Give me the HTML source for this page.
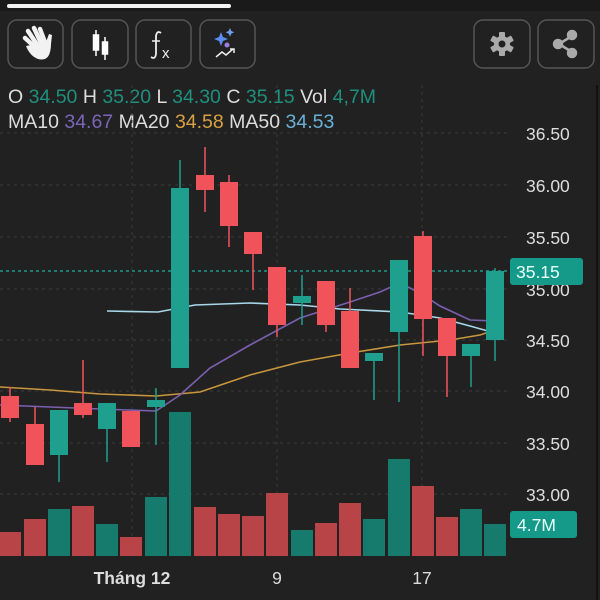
<!DOCTYPE html>
<html><head><meta charset="utf-8"><style>
html,body{margin:0;padding:0;background:#212121;width:600px;height:600px;overflow:hidden}
svg{display:block}
text{font-family:"Liberation Sans",sans-serif}
</style></head><body>
<svg width="600" height="600" viewBox="0 0 600 600" xmlns="http://www.w3.org/2000/svg">
<rect width="600" height="600" fill="#212121"/>
<rect width="600" height="11" fill="#1a1a1a"/>
<rect x="7" y="4" width="224" height="4" rx="2" fill="#f2f2f2"/>
<g fill="none" stroke="#555" stroke-width="1.5">
<rect x="8" y="20" width="55" height="48" rx="9"/>
<rect x="72" y="20" width="56" height="48" rx="9"/>
<rect x="136" y="20" width="55" height="48" rx="9"/>
<rect x="200" y="20" width="55" height="48" rx="9"/>
<rect x="474" y="20" width="56" height="48" rx="9"/>
<rect x="538" y="20" width="56" height="48" rx="9"/>
</g>
<!-- hand -->
<g fill="#f2f2f2" stroke="#f2f2f2" stroke-linecap="round">
<path d="M26 46 q4 10 12 13 q8 2 11 -4 q2 -5 2 -11 l1 -9 l-3 -1 l-3 8 z" stroke="none"/>
<line x1="25" y1="38" x2="36" y2="48" stroke-width="4.5"/>
<line x1="28" y1="31" x2="38" y2="46" stroke-width="4.5"/>
<line x1="34" y1="28" x2="42" y2="45" stroke-width="4.5"/>
<line x1="40" y1="29" x2="46" y2="45" stroke-width="4.5"/>
</g>
<g fill="#fff" stroke="#fff" stroke-width="1.5">
<line x1="96" y1="30" x2="96" y2="56"/><rect x="93.5" y="35" width="5" height="15"/>
<line x1="105" y1="37" x2="105" y2="60"/><rect x="102.5" y="42" width="5" height="12"/>
</g>
<path d="M161 33 q-4 -3 -5 3 v18 q-1 6 -5 3" fill="none" stroke="#eee" stroke-width="1.8"/>
<line x1="152" y1="41" x2="160" y2="41" stroke="#eee" stroke-width="1.5"/>
<text x="162" y="58" fill="#eee" font-size="15">x</text>
<path d="M221 32 l2 5 l5 2 l-5 2 l-2 5 l-2 -5 l-5 -2 l5 -2 z" fill="#5b8def"/>
<path d="M230 28 l1.3 3 l3 1.3 l-3 1.3 l-1.3 3 l-1.3 -3 l-3 -1.3 l3 -1.3 z" fill="#6fa0f0"/>
<circle cx="227" cy="45" r="2.5" fill="#9a7fe0"/>
<path d="M216 57 l6 -5 l4 3 l7 -6 M230 49 h4 v4" stroke="#eee" stroke-width="1.5" fill="none"/>
<g transform="translate(502,44)" fill="#aaa">
<circle r="8"/>
<g><rect x="-3" y="-12" width="6" height="24" rx="1"/><rect x="-3" y="-12" width="6" height="24" rx="1" transform="rotate(60)"/><rect x="-3" y="-12" width="6" height="24" rx="1" transform="rotate(120)"/></g>
<circle r="3.5" fill="#212121"/>
</g>
<g fill="#aaa" stroke="#aaa" stroke-width="2.5">
<line x1="559" y1="44" x2="572" y2="36"/><line x1="559" y1="44" x2="572" y2="52"/>
<circle cx="558" cy="44" r="4"/><circle cx="572" cy="35" r="4"/><circle cx="572" cy="53" r="4"/>
</g>
<text x="8" y="103" font-size="19.5" fill="#ddd">O <tspan fill="#1f8f7e">34.50</tspan> H <tspan fill="#1f8f7e">35.20</tspan> L <tspan fill="#1f8f7e">34.30</tspan> C <tspan fill="#1f8f7e">35.15</tspan> Vol <tspan fill="#1f8f7e">4,7M</tspan></text>
<text x="8" y="128" font-size="19.5" fill="#ddd">MA10 <tspan fill="#7a66b8">34.67</tspan> MA20 <tspan fill="#d9a040">34.58</tspan> MA50 <tspan fill="#6ab0d8">34.53</tspan></text>
<g stroke="#3a3a3a" stroke-width="1" stroke-dasharray="3,4">
<line x1="0" y1="133" x2="510" y2="133"/><line x1="0" y1="185" x2="510" y2="185"/>
<line x1="0" y1="237" x2="510" y2="237"/><line x1="0" y1="289" x2="510" y2="289"/>
<line x1="0" y1="340" x2="510" y2="340"/><line x1="0" y1="391" x2="510" y2="391"/>
<line x1="0" y1="443" x2="510" y2="443"/><line x1="0" y1="494" x2="510" y2="494"/>
<line x1="132" y1="85" x2="132" y2="556"/><line x1="277" y1="85" x2="277" y2="556"/><line x1="422" y1="85" x2="422" y2="556"/>
</g>
<line x1="597" y1="85" x2="597" y2="600" stroke="#111" stroke-width="2"/>
<g>
<rect x="0" y="532" width="21" height="24" fill="#b84448"/>
<rect x="24" y="519" width="22" height="37" fill="#b84448"/>
<rect x="48" y="509" width="22" height="47" fill="#167a6c"/>
<rect x="72" y="506" width="22" height="50" fill="#b84448"/>
<rect x="96" y="524" width="22" height="32" fill="#167a6c"/>
<rect x="120" y="537" width="22" height="19" fill="#b84448"/>
<rect x="145" y="497" width="22" height="59" fill="#167a6c"/>
<rect x="169" y="412" width="22" height="144" fill="#167a6c"/>
<rect x="194" y="507" width="22" height="49" fill="#b84448"/>
<rect x="218" y="514" width="22" height="42" fill="#b84448"/>
<rect x="242" y="516" width="22" height="40" fill="#b84448"/>
<rect x="266" y="493" width="22" height="63" fill="#b84448"/>
<rect x="291" y="530" width="22" height="26" fill="#167a6c"/>
<rect x="315" y="523" width="22" height="33" fill="#b84448"/>
<rect x="339" y="503" width="22" height="53" fill="#b84448"/>
<rect x="363" y="519" width="22" height="37" fill="#167a6c"/>
<rect x="388" y="459" width="22" height="97" fill="#167a6c"/>
<rect x="412" y="486" width="22" height="70" fill="#b84448"/>
<rect x="436" y="517" width="22" height="39" fill="#b84448"/>
<rect x="460" y="509" width="22" height="47" fill="#167a6c"/>
<rect x="484" y="524" width="22" height="32" fill="#167a6c"/>
</g>
<line x1="0" y1="271" x2="510" y2="271" stroke="#1f9a8a" stroke-width="1.5" stroke-dasharray="3,3"/>
<polyline fill="none" stroke="#c8963c" stroke-width="1.6" points="0,387 50,390 100,394 156,396 200,392 250,375 300,362 350,353 400,345 450,340 480,335 495,330"/>
<polyline fill="none" stroke="#7b5fb0" stroke-width="1.6" points="0,405 50,407 100,409 156,411 180,395 210,368 250,345 300,318 350,302 380,292 400,283 420,293 440,306 470,320 495,321"/>
<polyline fill="none" stroke="#a8d8ea" stroke-width="1.6" points="107,311 158,312 195,305 250,303 300,305 340,309 400,312 440,318 470,326 495,333"/>
<g stroke-width="1.5">
<g fill="#f0545a" stroke="#f0545a">
<line x1="10" y1="387" x2="10" y2="422"/><rect x="1" y="396" width="18" height="22" stroke="none"/>
<line x1="35" y1="407" x2="35" y2="465"/><rect x="26" y="424" width="18" height="41" stroke="none"/>
<line x1="83" y1="360" x2="83" y2="418"/><rect x="74" y="403" width="18" height="12" stroke="none"/>
<rect x="122" y="411" width="18" height="36" stroke="none"/>
<line x1="205" y1="147" x2="205" y2="212"/><rect x="196" y="175" width="18" height="15" stroke="none"/>
<line x1="229" y1="175" x2="229" y2="247"/><rect x="220" y="182" width="18" height="44" stroke="none"/>
<line x1="253" y1="232" x2="253" y2="290"/><rect x="244" y="232" width="18" height="22" stroke="none"/>
<line x1="277" y1="267" x2="277" y2="337"/><rect x="268" y="267" width="18" height="58" stroke="none"/>
<line x1="326" y1="281" x2="326" y2="332"/><rect x="317" y="281" width="18" height="44" stroke="none"/>
<line x1="350" y1="288" x2="350" y2="368"/><rect x="341" y="311" width="18" height="57" stroke="none"/>
<line x1="423" y1="231" x2="423" y2="356"/><rect x="414" y="236" width="18" height="83" stroke="none"/>
<line x1="447" y1="318" x2="447" y2="397"/><rect x="438" y="318" width="18" height="38" stroke="none"/>
</g>
<g fill="#1fa08e" stroke="#1fa08e">
<line x1="59" y1="410" x2="59" y2="482"/><rect x="50" y="410" width="18" height="45" stroke="none"/>
<line x1="107" y1="403" x2="107" y2="462"/><rect x="98" y="403" width="18" height="26" stroke="none"/>
<line x1="156" y1="388" x2="156" y2="445"/><rect x="147" y="400" width="18" height="7" stroke="none"/>
<line x1="180" y1="160" x2="180" y2="368"/><rect x="171" y="188" width="18" height="180" stroke="none"/>
<line x1="302" y1="275" x2="302" y2="325"/><rect x="293" y="296" width="18" height="7" stroke="none"/>
<line x1="374" y1="353" x2="374" y2="400"/><rect x="365" y="353" width="18" height="8" stroke="none"/>
<line x1="399" y1="260" x2="399" y2="402"/><rect x="390" y="260" width="18" height="72" stroke="none"/>
<line x1="471" y1="344" x2="471" y2="387"/><rect x="462" y="344" width="18" height="12" stroke="none"/>
<line x1="495" y1="268" x2="495" y2="361"/><rect x="486" y="271" width="18" height="69" stroke="none"/>
</g>
</g>
<g font-size="17.5" fill="#ddd">
<text x="526" y="140">36.50</text><text x="526" y="192">36.00</text>
<text x="526" y="244">35.50</text><text x="526" y="296">35.00</text>
<text x="526" y="347">34.50</text><text x="526" y="398">34.00</text>
<text x="526" y="450">33.50</text><text x="526" y="501">33.00</text>
</g>
<rect x="510" y="258" width="73" height="27" rx="3" fill="#159a8a"/>
<text x="516" y="278" font-size="17.5" fill="#e8fffb">35.15</text>
<rect x="510" y="511" width="67" height="27" rx="3" fill="#159a8a"/>
<text x="517" y="531" font-size="17.5" fill="#e8fffb">4.7M</text>
<g font-size="17.5" fill="#ddd" text-anchor="middle">
<text x="132" y="584" font-weight="bold">Tháng 12</text>
<text x="277" y="584">9</text>
<text x="422" y="584">17</text>
</g>
</svg>
</body></html>
